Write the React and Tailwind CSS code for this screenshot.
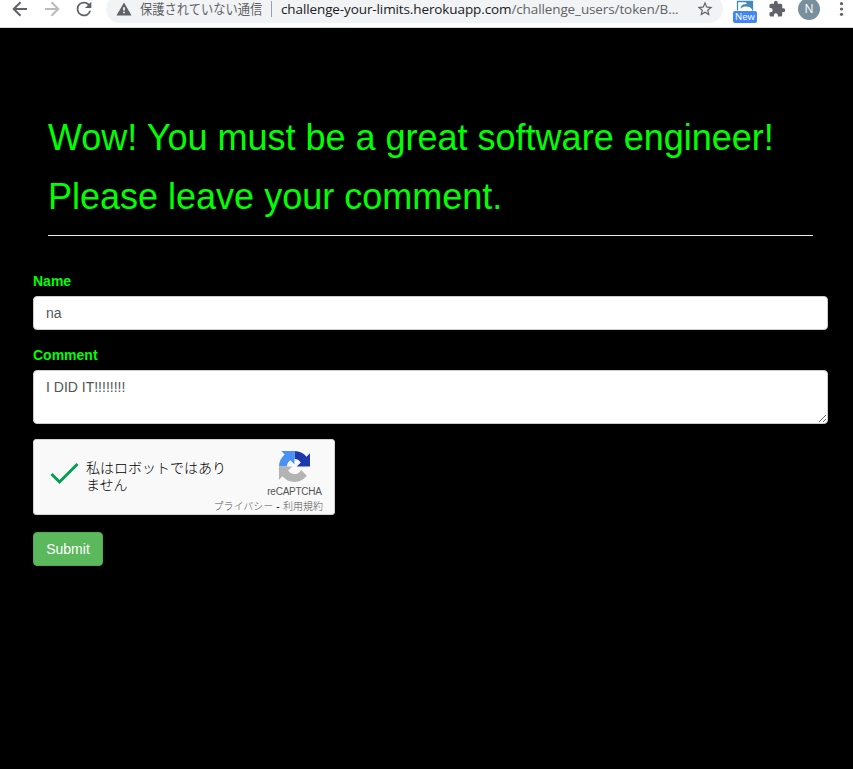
import React from "react";

function Toolbar() {
  return (
    <header className="h-[28px] bg-white border-b border-[#d5d7da] overflow-hidden font-['Open_Sans','Noto_Sans_CJK_JP',sans-serif]">
      <div className="flex items-center h-[28px] -mt-[5px] text-[#5f6368]">
        <svg className="ml-[8px] w-6 h-6 shrink-0" viewBox="0 0 24 24" fill="none" stroke="#5f6368" strokeWidth="2">
          <path d="M19 12H6M12.5 5.2 5.7 12l6.8 6.8" />
        </svg>
        <svg className="ml-[8px] w-6 h-6 shrink-0" viewBox="0 0 24 24" fill="none" stroke="#b9bbbe" strokeWidth="2">
          <path d="M5 12h13M11.5 5.2l6.8 6.8-6.8 6.8" />
        </svg>
        <svg className="ml-[9px] w-[22px] h-[22px] shrink-0" viewBox="0 0 24 24" fill="#5f6368">
          <path d="M17.65 6.35A7.96 7.96 0 0 0 12 4a8 8 0 1 0 7.73 10h-2.08A6 6 0 1 1 12 6c1.66 0 3.14.69 4.22 1.78L13 11h7V4z" />
        </svg>
        <div className="ml-[11px] w-[617px] h-7 rounded-full bg-[#f1f3f4] flex items-center shrink-0">
          <svg className="ml-[9px] w-[18px] h-[18px] shrink-0" viewBox="0 0 24 24" fill="#5f6368">
            <path d="M2 20.500h20L12 3.200zm11.200-2.700h-2.400v-2.200h2.400zm0-3.800h-2.400V9.600h2.400z" />
          </svg>
          <span className="ml-[7px] w-[123px] text-[14px] leading-5 whitespace-nowrap shrink-0">
            <span className="inline-block origin-left scale-x-[0.875]">保護されていない通信</span>
          </span>
          <span className="ml-[8px] w-px h-4 bg-[#9aa0a6]" />
          <span className="ml-[9px] w-[400px] text-[13.5px] leading-5 tracking-[-0.11px] whitespace-nowrap shrink-0">
            <span className="text-[#202124]">challenge-your-limits.herokuapp.com</span>
            <span>/challenge_users/token/B...</span>
          </span>
          <svg className="ml-[15px] w-[18px] h-[18px] shrink-0" viewBox="0 0 24 24" fill="#5f6368">
            <path d="M22 9.24l-7.19-.62L12 2 9.19 8.63 2 9.24l5.46 4.73L5.82 21 12 17.27 18.18 21l-1.63-7.03L22 9.24zM12 15.4l-3.76 2.27 1-4.28-3.32-2.88 4.38-.38L12 6.1l1.71 4.04 4.38.38-3.32 2.88 1 4.28L12 15.4z" />
          </svg>
        </div>
        <div className="ml-[10px] w-6 h-7 flex flex-col items-center shrink-0">
          <svg className="mt-[5px] w-[18px] h-[11px] shrink-0" viewBox="0 0 18 11">
            <path d="M1.5 10.500v-9h15v9" fill="#fff" stroke="#448aba" strokeWidth="1.3" />
            <path d="M4.500 8.500C5 4.500 8 4 11 4L9.500 2H16v7l-2.500-2C11 6 7 6 4.500 8.500z" fill="#448aba" />
          </svg>
          <span className="w-6 h-3 rounded-[2px] bg-[#4285f4] text-white text-[9.5px] leading-[12px] font-medium text-center">New</span>
        </div>
        <svg className="ml-[11px] w-[18px] h-[18px] shrink-0" viewBox="0 0 24 24" fill="#5f6368">
          <path d="M20.5 11H19V7a2 2 0 0 0-2-2h-4V3.500a2.500 2.500 0 0 0-5 0V5H4a2 2 0 0 0-2 2v3.800h1.500a2.700 2.700 0 0 1 0 5.400H2V20a2 2 0 0 0 2 2h3.800v-1.500a2.700 2.700 0 0 1 5.400 0V22H17a2 2 0 0 0 2-2v-4h1.500a2.500 2.500 0 0 0 0-5z" />
        </svg>
        <span className="ml-[12px] w-[22px] h-[22px] rounded-full bg-[#78909c] text-white text-[12px] leading-[22px] text-center shrink-0">N</span>
        <svg className="ml-[11px] w-[20px] h-[20px] shrink-0" viewBox="0 0 20 20" fill="#5f6368">
          <circle cx="10.5" cy="4.7" r="1.6" />
          <circle cx="10.5" cy="10" r="1.6" />
          <circle cx="10.5" cy="15.3" r="1.6" />
        </svg>
      </div>
    </header>
  );
}

function RecaptchaLogo() {
  return (
    <svg className="w-[31px] h-[31px]" viewBox="0 0 64 64">
      <path fill="#1c3aa9" d="M64 31.955l-.033-1.37V4.687l-7.16 7.16C50.948 4.674 42.033.093 32.05.093v16.26c.485 0 .86.057 1.135.163 4.976.393 9.288 3.14 11.828 7.124l-8.307 8.307L64 31.953" />
      <path fill="#4a90f5" d="M31.862.094l-1.37.033H4.594l7.16 7.16C4.58 13.147 0 22.06 0 32.046h16.26c0-.485.057-.86.163-1.135.393-4.976 3.14-9.288 7.124-11.828l8.307 8.307L31.86.095" />
      <path fill="#b3b3b3" d="M.001 32.045l.033 1.37v25.898l7.16-7.16c5.86 7.173 14.774 11.754 24.76 11.754 10.4 0 19.622-4.96 25.458-12.64l-11.736-11.86a15.55 15.55 0 0 1-4.754 5.334c-2.05 1.6-4.952 2.906-8.968 2.906-.485 0-.86-.057-1.135-.163-4.976-.393-9.288-3.14-11.828-7.124l8.307-8.307L0 32.045" />
    </svg>
  );
}

function Recaptcha() {
  return (
    <div className="w-[302px] h-[76px] rounded-[3px] border border-[#d3d3d3] bg-[#f9f9f9] font-['Liberation_Sans','Noto_Sans_CJK_JP',sans-serif]">
      <div className="flex h-[59px]">
        <svg className="ml-[15px] mt-[21px] w-[32px] h-[26px] shrink-0" viewBox="0 0 32 26" fill="none" stroke="#009e55" strokeWidth="3">
          <path d="M2.5 13 10.500 21 28.500 3" />
        </svg>
        <p className="ml-[5px] mt-[20px] w-[145px] text-[14px] leading-[17px] text-black font-light">
          私はロボットではあり
          <br />
          ません
        </p>
        <div className="ml-[28px] w-[71px] flex flex-col items-center">
          <div className="mt-[11px] h-[31px]">
            <RecaptchaLogo />
          </div>
          <span className="mt-[5px] text-[10px] leading-[10px] tracking-[-0.25px] text-[#555]">reCAPTCHA</span>
        </div>
      </div>
      <p className="mr-[11px] text-right text-[10px] leading-[16px] text-[#555] font-light whitespace-nowrap">
        プライバシー<span className="text-black tracking-[0.3px]"> - </span>利用規約
      </p>
    </div>
  );
}

export default function App() {
  return (
    <div className="w-[853px] h-[769px] bg-black overflow-hidden font-['Liberation_Sans',Arial,sans-serif]">
      <Toolbar />
      <main className="pl-[33px] pr-[25px] pt-[90px] text-[14px] leading-5">
        <div className="mx-[15px] pb-[18px] border-b border-[#eee] text-[#0f0] text-[36px] leading-[40px]">
          <h1>Wow! You must be a great software engineer!</h1>
          <h1 className="mt-[19px]">Please leave your comment.</h1>
        </div>
        <form className="mt-[35px] flex flex-col items-start">
          <label htmlFor="name" className="font-bold text-[#0f0]">Name</label>
          <input id="name" defaultValue="na" className="mt-[5px] block w-full h-[34px] px-3 rounded-[4px] border border-[#ccc] bg-white text-[#555]" />
          <label htmlFor="comment" className="mt-[15px] font-bold text-[#0f0]">Comment</label>
          <textarea id="comment" defaultValue="I DID IT!!!!!!!!" className="mt-[5px] block w-full h-[54px] px-3 py-[6px] rounded-[4px] border border-[#ccc] bg-white text-[#555] resize overflow-hidden" />
          <div className="mt-[15px]">
            <Recaptcha />
          </div>
          <button type="button" className="mt-[17px] w-[70px] h-[34px] rounded-[4px] border border-[#4cae4c] bg-[#5cb85c] text-white">Submit</button>
        </form>
      </main>
    </div>
  );
}
